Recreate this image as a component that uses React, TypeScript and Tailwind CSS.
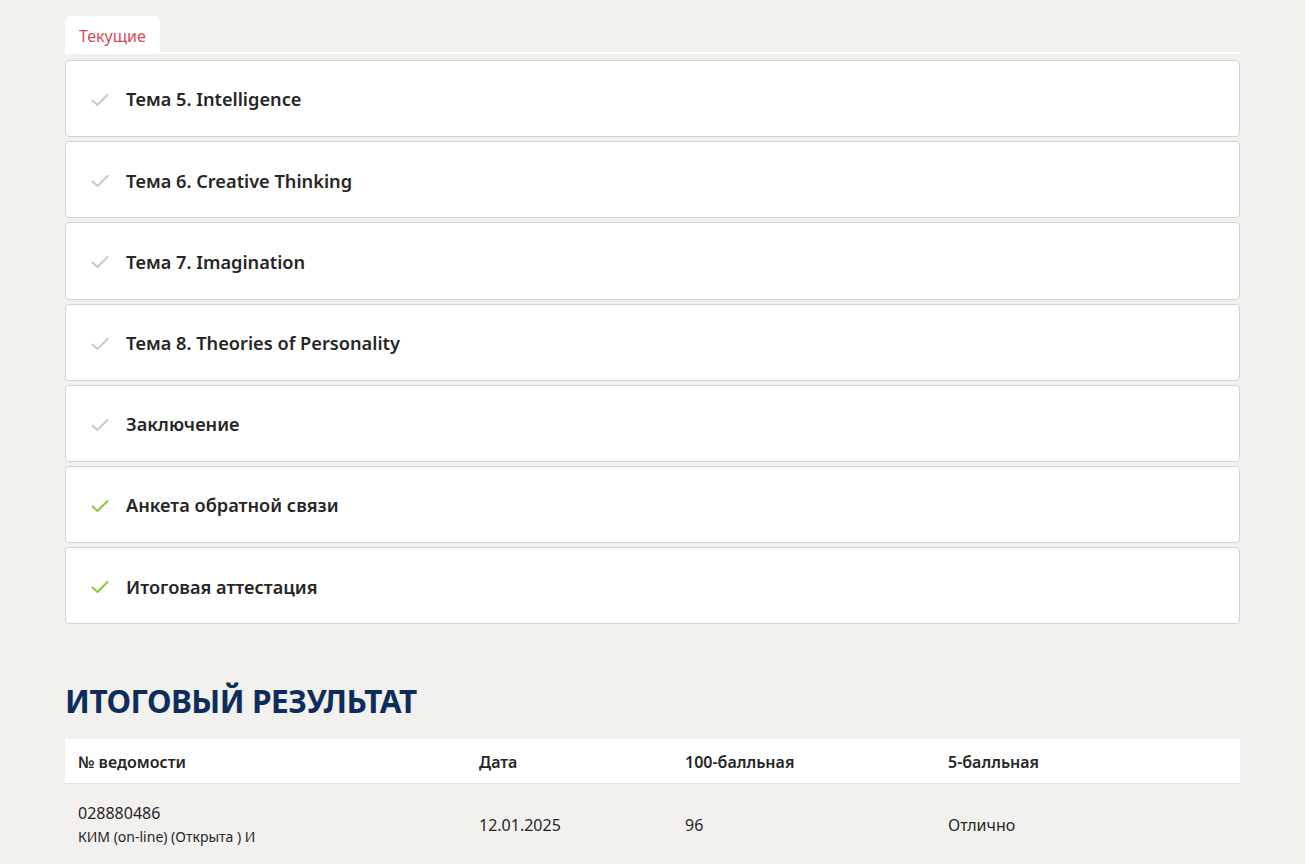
import React from 'react'

const topics = [
  { title: 'Тема 5. Intelligence', done: false },
  { title: 'Тема 6. Creative Thinking', done: false },
  { title: 'Тема 7. Imagination', done: false },
  { title: 'Тема 8. Theories of Personality', done: false },
  { title: 'Заключение', done: false },
  { title: 'Анкета обратной связи', done: true },
  { title: 'Итоговая аттестация', done: true },
]

const Check = ({ done }: { done: boolean }) => (
  <svg width="18" height="14" viewBox="0 0 18 14" fill="none">
    <path
      d="M1.5 7.5 L6.5 12 L16.5 2"
      stroke={done ? '#8cc63f' : '#c9c9c9'}
      strokeWidth="2"
      strokeLinecap="round"
      strokeLinejoin="round"
    />
  </svg>
)

export default function App() {
  return (
    <main
      className="min-h-screen bg-[#f2f1ee] px-[65px] pt-4 text-[#262626]"
      style={{ fontFamily: '"Noto Sans", "Open Sans", sans-serif' }}
    >
      {/* Tabs */}
      <div className="border-b-2 border-white">
        <div className="inline-block rounded-t-md bg-white px-[14px] pt-[9px] pb-[5px] text-[16px] leading-[22px] text-[#d9495b]">
          Текущие
        </div>
      </div>

      {/* Topic list */}
      <div className="mt-[6px] flex flex-col gap-[4px]">
        {topics.map((t) => (
          <div
            key={t.title}
            className="flex h-[77.2px] items-center gap-[17px] rounded-[4px] border border-[#d3d3d3] bg-white pl-[25px] pt-[3px]"
          >
            <Check done={t.done} />
            <span className="text-[18.2px] font-semibold">{t.title}</span>
          </div>
        ))}
      </div>

      {/* Final result */}
      <h2
        className="mt-[61px] text-[31.5px] font-bold uppercase leading-none tracking-[-0.5px] text-[#0d2e5c]"
        style={{ fontStretch: 'condensed' }}
      >
        Итоговый результат
      </h2>

      <table className="mt-[22px] w-full border-collapse text-left text-[16px]">
        <thead>
          <tr className="h-[45px] border-b border-[#e2e2e2] bg-white">
            <th className="w-[401px] pl-[13px] pt-[2px] font-semibold">№ ведомости</th>
            <th className="w-[206px] pl-[13px] pt-[2px] font-semibold">Дата</th>
            <th className="w-[263px] pl-[13px] pt-[2px] font-semibold">100-балльная</th>
            <th className="pl-[13px] pt-[2px] font-semibold">5-балльная</th>
          </tr>
        </thead>
        <tbody>
          <tr className="h-[82px]">
            <td className="pl-[13px]">
              <div className="leading-[24px]">028880486</div>
              <div className="text-[14px] leading-[24px]">КИМ (on-line) (Открыта ) И</div>
            </td>
            <td className="pl-[13px]">12.01.2025</td>
            <td className="pl-[13px]">96</td>
            <td className="pl-[13px]">Отлично</td>
          </tr>
        </tbody>
      </table>
    </main>
  )
}
